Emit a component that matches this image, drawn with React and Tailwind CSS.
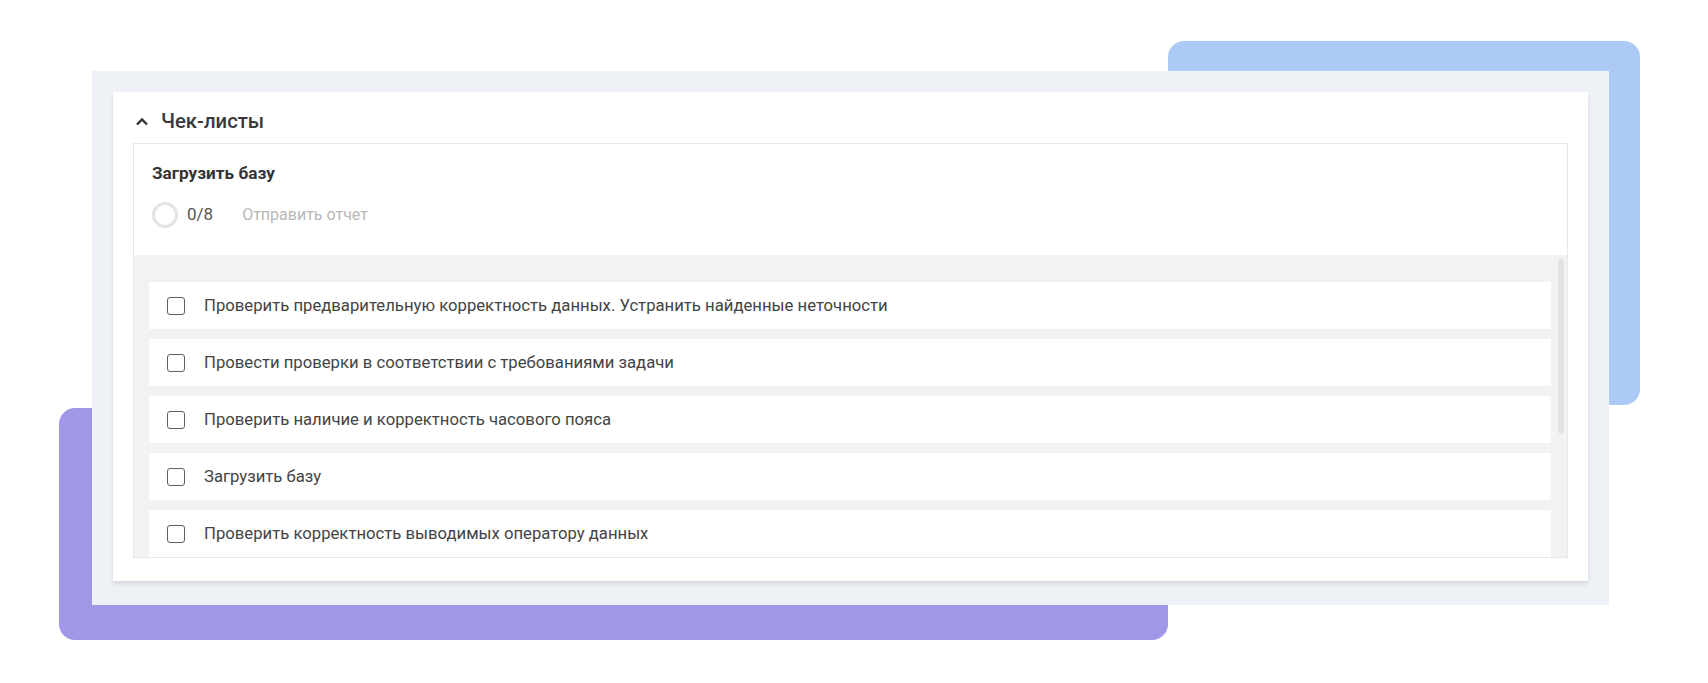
import React from "react";

const items = [
  "Проверить предварительную корректность данных. Устранить найденные неточности",
  "Провести проверки в соответствии с требованиями задачи",
  "Проверить наличие и корректность часового пояса",
  "Загрузить базу",
  "Проверить корректность выводимых оператору данных",
];

const ChecklistRow = ({ text }) => (
  <div className="flex items-center h-[47px] shrink-0 bg-white pl-[18px]">
    <span className="w-[18px] h-[18px] border-[1.5px] border-[#5f5f5f] rounded-[3px] shrink-0" />
    <span className="ml-[19px] text-[16.7px] text-[#444]">{text}</span>
  </div>
);

export default function App() {
  return (
    <div
      className="relative w-[1708px] h-[683px] bg-white overflow-hidden"
      style={{ fontFamily: "Roboto, 'Noto Sans', sans-serif" }}
    >
      {/* decorative shapes behind the panel */}
      <div className="absolute left-[1168px] top-[41px] w-[472px] h-[364px] rounded-[16px] bg-[#adc9f6]" />
      <div className="absolute left-[59px] top-[408px] w-[1109px] h-[232px] rounded-[16px] bg-[#a098e6]" />

      <div className="relative ml-[92px] mt-[71px] w-[1517px] h-[534px] bg-[#eef2f7] pt-[21px] pl-[21px] pr-[21px] pb-[24px]">
        <div className="h-full bg-white shadow-[0_3px_4px_rgba(0,0,0,0.10)] flex flex-col px-[20px]">
          {/* header */}
          <div className="h-[51px] flex items-center pl-[2px] pt-[8px]">
            <svg width="14" height="9" viewBox="0 0 14 9" className="shrink-0">
              <path d="M2 7.5 L7 2.5 L12 7.5" fill="none" stroke="#333" strokeWidth="2.4" />
            </svg>
            <span className="ml-[12px] text-[20.3px] font-medium text-[#3a3a3a]">Чек-листы</span>
          </div>

          {/* inner box */}
          <div className="flex-1 mb-[23px] border border-[#e8e8e8] flex flex-col min-h-0">
            <div className="h-[111px] shrink-0 pl-[18px] pt-[17px]">
              <div className="text-[17.2px] font-bold text-[#333]">Загрузить базу</div>
              <div className="flex items-center mt-[15px]">
                <span className="w-[26px] h-[26px] rounded-full border-[3px] border-[#e4e4e4]" />
                <span className="ml-[9px] text-[17px] text-[#555]">0/8</span>
                <span className="ml-[29px] text-[16px] text-[#b8b8b8]">Отправить отчет</span>
              </div>
            </div>
            <div className="relative flex-1 min-h-0 overflow-hidden bg-[#f2f2f2] pt-[27px] pl-[15px] pr-[16px] flex flex-col gap-[10px]">
              {items.map((t, i) => (
                <ChecklistRow key={i} text={t} />
              ))}
              <div className="absolute right-[3px] top-[4px] w-[6px] h-[175px] rounded-full bg-[#e2e2e2]" />
            </div>
          </div>
        </div>
      </div>
    </div>
  );
}
